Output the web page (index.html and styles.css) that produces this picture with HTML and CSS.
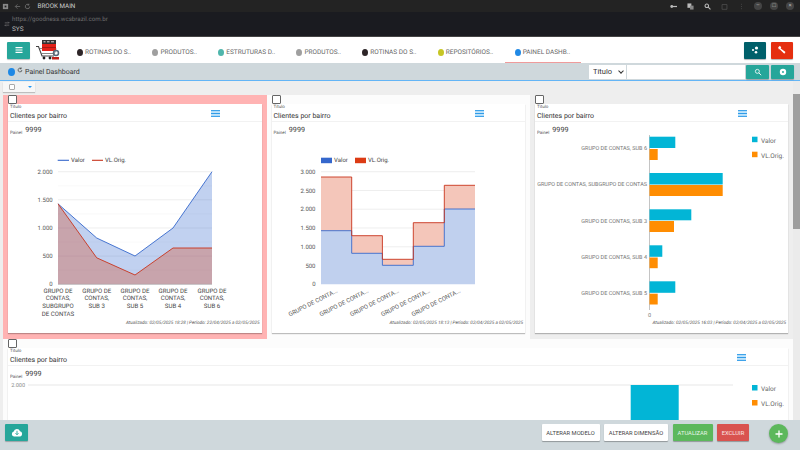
FILE: index.html
```html
<!DOCTYPE html>
<html lang="en">
<head>
  <title>Painel Dashboard</title>
  <link rel="stylesheet" href="styles.css">
</head>
<body>
  <div class="win-bar">
    <div class="win-left">
      <svg class="win-ico" viewBox="0 0 8 8"><rect x="1" y="1" width="6" height="6" fill="#888"/><rect x="3" y="3" width="2" height="2" fill="#222"/></svg>
      <svg class="win-ico win-nav" viewBox="0 0 8 8"><path d="M7 4H1.5M4 1.5L1.5 4 4 6.5" fill="none" stroke="#666" stroke-width="1"/></svg>
      <svg class="win-ico win-nav" viewBox="0 0 8 8"><path d="M6.5 4A2.5 2.5 0 1 1 5.5 2M5.5 .8V2.4H4" fill="none" stroke="#777" stroke-width=".9"/></svg>
      <span class="win-title">BROOK MAIN</span>
    </div>
    <div class="win-right">
      <svg class="win-ico" viewBox="0 0 8 8"><circle cx="2" cy="4" r="1.6" fill="#bbb"/><path d="M3 3.3h5v1.4H3z" fill="#bbb"/></svg>
      <svg class="win-ico" viewBox="0 0 8 8"><rect x=".5" y=".5" width="4.5" height="5" fill="#bbb"/><rect x="3.5" y="3" width="4" height="4.5" fill="#888"/></svg>
      <svg class="win-ico" viewBox="0 0 8 8"><circle cx="3.2" cy="3.2" r="2" fill="none" stroke="#bbb" stroke-width="1.2"/><path d="M4.8 4.8L7.4 7.4" stroke="#bbb" stroke-width="1.2"/></svg>
      <svg class="win-ico" viewBox="0 0 8 8"><path d="M1.2 1.8h5.6v5.4H1.2z" fill="none" stroke="#555" stroke-width=".8"/></svg>
      <svg class="win-ico" viewBox="0 0 8 8"><path d="M4 1v.8M4 3.6v.8M4 6.2V7" stroke="#555" stroke-width="1"/></svg>
      <span class="win-btn">&ndash;</span>
      <span class="win-btn">&#9633;</span>
      <span class="win-btn">&times;</span>
    </div>
  </div>

  <div class="url-bar">
    <svg class="url-swap" viewBox="0 0 8 8"><path d="M1 2.5h6M5.5 1L7 2.5M7 5.5H1M2.5 7L1 5.5" fill="none" stroke="#888" stroke-width=".8"/></svg>
    <div>
      <div class="url-text">https://goodness.wcsbrazil.com.br</div>
      <div class="url-sys">SYS</div>
    </div>
  </div>

  <div class="top-bar">
    <button class="btn-teal btn-menu" type="button">
      <svg viewBox="0 0 10 10"><path d="M1.5 2.6h7M1.5 5h7M1.5 7.4h7" stroke="#fff" stroke-width="1.1"/></svg>
    </button>
    <svg class="logo" viewBox="0 0 24 20">
      <path d="M0 6.500h2.500L6 16h12" fill="none" stroke="#444" stroke-width="1.100"/>
      <path d="M3.500 8.500H20l-1.500 5H5.500" fill="none" stroke="#555" stroke-width=".7"/>
      <rect x="6" y="1" width="14" height="10" fill="#e32119"/>
      <rect x="6" y="0" width="14" height="4" fill="#333"/>
      <path d="M7.500 1.800h2M11 1.800h2.500M15 1.800h3" stroke="#ddd" stroke-width="1"/>
      <path d="M6 7.500h14" stroke="#7a1512" stroke-width=".6"/>
      <circle cx="8" cy="18" r="1.400" fill="#222"/>
      <circle cx="14" cy="18" r="1.400" fill="#222"/>
      <circle cx="20" cy="13" r="2.500" fill="none" stroke="#567" stroke-width="1.500"/>
      <rect x="16" y="17" width="7" height="2.500" fill="#c0211b"/>
    </svg>
    <nav class="tabs">
      <span class="tab"><i class="dot dot-black"></i>ROTINAS DO S..</span>
      <span class="tab"><i class="dot dot-gray"></i>PRODUTOS..</span>
      <span class="tab"><i class="dot dot-teal"></i>ESTRUTURAS D..</span>
      <span class="tab"><i class="dot dot-gray"></i>PRODUTOS..</span>
      <span class="tab"><i class="dot dot-black"></i>ROTINAS DO S..</span>
      <span class="tab"><i class="dot dot-yellow"></i>REPOSITÓRIOS..</span>
      <span class="tab tab-active"><i class="dot dot-blue"></i>PAINEL DASHB..</span>
    </nav>
    <div class="top-actions">
      <button class="btn-square btn-dark" type="button">
        <svg viewBox="0 0 10 10"><circle cx="6.500" cy="3" r="1.600" fill="#fff"/><circle cx="3" cy="5" r="1.100" fill="#fff"/><circle cx="6" cy="7.300" r="1.300" fill="#fff"/></svg>
      </button>
      <button class="btn-square btn-red" type="button">
        <svg viewBox="0 0 10 10"><path d="M1.200 2.200L3 .8l1.200 1.600-.5 1 4.800 3.600-1.200 1.700L2.700 4.200l-1 .1z" fill="#fff"/></svg>
      </button>
    </div>
  </div>

  <div class="sub-bar">
    <i class="dot dot-blue dot-big"></i>
    <svg class="sub-refresh" viewBox="0 0 8 8"><path d="M6.500 4A2.500 2.500 0 1 1 5.500 2M5.500 .6V2.400H3.700" fill="none" stroke="#444" stroke-width="1"/></svg>
    <span class="sub-title">Painel Dashboard</span>
    <div class="search">
      <div class="search-select">
        <select class="search-field">
          <option>Título</option>
        </select>
      </div>
      <input class="search-input" type="text">
      <button class="btn-teal btn-search" type="button">
        <svg viewBox="0 0 10 10"><circle cx="4.200" cy="4.200" r="2.500" fill="none" stroke="#fff" stroke-width="1"/><path d="M6 6l3 3" stroke="#fff" stroke-width="1.100"/></svg>
      </button>
      <button class="btn-teal btn-search" type="button">
        <svg viewBox="0 0 10 10"><circle cx="5" cy="5" r="4" fill="#fff"/><circle cx="5" cy="5" r="1.200" fill="#26a69a"/></svg>
      </button>
    </div>
  </div>

  <div class="content">
    <div class="toolbar">
      <div class="select-all">
        <input class="check check-small" type="checkbox">
        <i class="caret"></i>
      </div>
    </div>

    <div class="grid">
      <div class="tile tile-alert">
        <input class="check" type="checkbox">
        <div class="card">
          <div class="card-head">
            <div>
              <div class="card-label">Título</div>
              <div class="card-title">Clientes por bairro</div>
            </div>
            <svg class="card-menu" viewBox="0 0 9 7"><rect width="9" height="7" fill="#bfe3fa"/><path d="M0 .6h9M0 3.500h9M0 6.400h9" stroke="#2f9be8" stroke-width="1"/></svg>
          </div>
          <div class="card-value"><span class="card-label">Painel</span><span class="value">9999</span></div>
          <svg class="chart" width="253" height="183" viewBox="8 135 253 183">
            <g class="grid-minor">
              <path d="M58 185.800H212M58 213.900H212M58 242.100H212M58 270.200H212"/>
            </g>
            <g class="grid-major">
              <path d="M58 171.700H212M58 199.800H212M58 228H212M58 256.100H212"/>
            </g>
            <path d="M58 203.800L96.700 238 135 256 173 228 212 171.700V284.300H58Z" fill="#3366cc" fill-opacity=".3"/>
            <path d="M58 203.800L96.700 257.800 135 275 173 248 212 248V284.300H58Z" fill="#dc3912" fill-opacity=".3"/>
            <path d="M58 203.800L96.700 238 135 256 173 228 212 171.700" fill="none" stroke="#3366cc" stroke-width=".9"/>
            <path d="M58 203.800L96.700 257.800 135 275 173 248 212 248" fill="none" stroke="#c8321a" stroke-width=".9"/>
            <path d="M58 284.300H212" stroke="#999" stroke-width=".5"/>
            <path d="M57.700 160.300H69" stroke="#3366cc" stroke-width="1.100"/>
            <text class="legend" x="71" y="162.300">Valor</text>
            <path d="M92 160.300H103" stroke="#c8321a" stroke-width="1.100"/>
            <text class="legend" x="105" y="162.300">VL.Orig.</text>
            <g class="tick">
              <text x="52.700" y="173.700">2.000</text>
              <text x="52.700" y="201.800">1.500</text>
              <text x="52.700" y="230">1.000</text>
              <text x="52.700" y="258.100">500</text>
              <text x="52.700" y="286.300">0</text>
            </g>
            <g class="cat">
              <text x="58" y="292.700">GRUPO DE</text><text x="58" y="300.300">CONTAS,</text><text x="58" y="308">SUBGRUPO</text><text x="58" y="315.500">DE CONTAS</text>
              <text x="96.700" y="292.700">GRUPO DE</text><text x="96.700" y="300.300">CONTAS,</text><text x="96.700" y="308">SUB 3</text>
              <text x="135" y="292.700">GRUPO DE</text><text x="135" y="300.300">CONTAS,</text><text x="135" y="308">SUB 5</text>
              <text x="173" y="292.700">GRUPO DE</text><text x="173" y="300.300">CONTAS,</text><text x="173" y="308">SUB 4</text>
              <text x="212" y="292.700">GRUPO DE</text><text x="212" y="300.300">CONTAS,</text><text x="212" y="308">SUB 6</text>
            </g>
          </svg>
          <div class="card-status">Atualizado: 02/05/2025 18:28 | Período: 22/04/2025 a 02/05/2025</div>
        </div>
      </div>

      <div class="tile tile-white">
        <input class="check" type="checkbox">
        <div class="card">
          <div class="card-head">
            <div>
              <div class="card-label">Título</div>
              <div class="card-title">Clientes por bairro</div>
            </div>
            <svg class="card-menu" viewBox="0 0 9 7"><rect width="9" height="7" fill="#bfe3fa"/><path d="M0 .6h9M0 3.500h9M0 6.400h9" stroke="#2f9be8" stroke-width="1"/></svg>
          </div>
          <div class="card-value"><span class="card-label">Painel</span><span class="value">9999</span></div>
          <svg class="chart" width="252" height="183" viewBox="272 135 252 183">
            <g class="grid-major">
              <path d="M321 171.700H475M321 190.500H475M321 209.200H475M321 228H475M321 246.800H475M321 265.500H475"/>
            </g>
            <path d="M321 230.700H351.700V253.300H382.400V265.300H413.300V246.300H444.300V209H475V284.300H321Z" fill="#c0d0ee"/>
            <path d="M321 177H351.700V235.700H382.400V259.300H413.300V222.700H444.300V185.300H475V209H444.300V246.300H413.300V265.300H382.400V253.300H351.700V230.700H321Z" fill="#f4c6ba"/>
            <path d="M321 230.700H351.700V253.300H382.400V265.300H413.300V246.300H444.300V209H475" fill="none" stroke="#3366cc" stroke-width=".9"/>
            <path d="M321 177H351.700V235.700H382.400V259.300H413.300V222.700H444.300V185.300H475" fill="none" stroke="#c8321a" stroke-width=".9"/>
            <rect x="321" y="157.700" width="11" height="5.500" fill="#3366cc"/>
            <text class="legend" x="334" y="162.300">Valor</text>
            <rect x="355" y="157.700" width="11" height="5.500" fill="#dc3912"/>
            <text class="legend" x="368" y="162.300">VL.Orig.</text>
            <g class="tick">
              <text x="315.500" y="173.700">3.000</text>
              <text x="315.500" y="192.500">2.500</text>
              <text x="315.500" y="211.200">2.000</text>
              <text x="315.500" y="230">1.500</text>
              <text x="315.500" y="248.800">1.000</text>
              <text x="315.500" y="267.500">500</text>
              <text x="315.500" y="286.300">0</text>
            </g>
            <g class="cat-tilt">
              <text transform="translate(338 292) rotate(-27)">GRUPO DE CONTA...</text>
              <text transform="translate(369 292) rotate(-27)">GRUPO DE CONTA...</text>
              <text transform="translate(399.500 292) rotate(-27)">GRUPO DE CONTA...</text>
              <text transform="translate(430.500 292) rotate(-27)">GRUPO DE CONTA...</text>
              <text transform="translate(461 292) rotate(-27)">GRUPO DE CONTA...</text>
            </g>
          </svg>
          <div class="card-status">Atualizado: 02/05/2025 18:13 | Período: 02/04/2025 a 02/05/2025</div>
        </div>
      </div>

      <div class="tile">
        <input class="check" type="checkbox">
        <div class="card">
          <div class="card-head">
            <div>
              <div class="card-label">Título</div>
              <div class="card-title">Clientes por bairro</div>
            </div>
            <svg class="card-menu" viewBox="0 0 9 7"><rect width="9" height="7" fill="#bfe3fa"/><path d="M0 .6h9M0 3.500h9M0 6.400h9" stroke="#2f9be8" stroke-width="1"/></svg>
          </div>
          <div class="card-value"><span class="card-label">Painel</span><span class="value">9999</span></div>
          <svg class="chart" width="252" height="183" viewBox="535 135 252 183">
            <path d="M649.500 135V310" stroke="#aaa" stroke-width=".7"/>
            <g fill="#00b5d6">
              <rect x="649.500" y="136.700" width="25.800" height="11.300"/>
              <rect x="649.500" y="173" width="73.200" height="11.500"/>
              <rect x="649.500" y="209.300" width="41.800" height="11"/>
              <rect x="649.500" y="245.300" width="12.800" height="11.500"/>
              <rect x="649.500" y="281.300" width="25.800" height="11.500"/>
            </g>
            <g fill="#ff8c00">
              <rect x="649.500" y="149" width="8.200" height="11"/>
              <rect x="649.500" y="185" width="73.200" height="11"/>
              <rect x="649.500" y="221" width="24.500" height="11"/>
              <rect x="649.500" y="257.500" width="8.200" height="10.700"/>
              <rect x="649.500" y="293.700" width="8.200" height="10.800"/>
            </g>
            <g class="bar-cat">
              <text x="647" y="149.700">GRUPO DE CONTAS, SUB 6</text>
              <text x="647" y="186">GRUPO DE CONTAS, SUBGRUPO DE CONTAS</text>
              <text x="647" y="222.700">GRUPO DE CONTAS, SUB 3</text>
              <text x="647" y="259">GRUPO DE CONTAS, SUB 4</text>
              <text x="647" y="295">GRUPO DE CONTAS, SUB 5</text>
            </g>
            <text class="bar-zero" x="649.500" y="317">0</text>
            <rect x="752" y="136.700" width="5.500" height="5.500" fill="#00b5d6"/>
            <text class="legend-big" x="761" y="142.800">Valor</text>
            <rect x="752" y="151.700" width="5.500" height="5.500" fill="#ff8c00"/>
            <text class="legend-big" x="761" y="158">VL.Orig.</text>
          </svg>
          <div class="card-status">Atualizado: 02/05/2025 16:03 | Período: 02/04/2025 a 02/05/2025</div>
        </div>
      </div>

      <div class="tile tile-white tile-wide">
        <input class="check" type="checkbox">
        <div class="card">
          <div class="card-head card-head-wide">
            <div>
              <div class="card-label">Título</div>
              <div class="card-title">Clientes por bairro</div>
            </div>
            <svg class="card-menu" viewBox="0 0 9 7"><rect width="9" height="7" fill="#bfe3fa"/><path d="M0 .6h9M0 3.500h9M0 6.400h9" stroke="#2f9be8" stroke-width="1"/></svg>
          </div>
          <div class="card-value"><span class="card-label">Painel</span><span class="value">9999</span></div>
          <svg class="chart" width="780" height="130" viewBox="8 379 780 130">
            <path d="M28 385H733" stroke="#ddd" stroke-width=".7"/>
            <text class="tick-wide" x="25" y="387">2.000</text>
            <rect x="630.700" y="385" width="48" height="120" fill="#00b5d6"/>
            <rect x="752" y="385" width="5.500" height="5.500" fill="#00b5d6"/>
            <text class="legend-big" x="761" y="391">Valor</text>
            <rect x="752" y="400" width="5.500" height="5.500" fill="#ff8c00"/>
            <text class="legend-big" x="761" y="406">VL.Orig.</text>
          </svg>
        </div>
      </div>
    </div>

    <div class="scrollbar"><div class="scroll-thumb"></div></div>
  </div>

  <div class="footer">
    <button class="btn-teal btn-cloud" type="button">
      <svg viewBox="0 0 12 9"><path d="M3 8.500A2.500 2.500 0 0 1 2.700 3.600 3.300 3.300 0 0 1 9 3.300 2.700 2.700 0 0 1 9.300 8.500Z" fill="#fff"/><path d="M6 2.800V6.500M4.500 5.200L6 6.800 7.500 5.200" fill="none" stroke="#26a69a" stroke-width=".9"/></svg>
    </button>
    <div class="footer-actions">
      <button class="btn-flat btn-model" type="button">ALTERAR MODELO</button>
      <button class="btn-flat btn-size" type="button">ALTERAR DIMENSÃO</button>
      <button class="btn-flat btn-update" type="button">ATUALIZAR</button>
      <button class="btn-flat btn-delete" type="button">EXCLUIR</button>
    </div>
    <button class="btn-add" type="button">
      <svg viewBox="0 0 10 10"><path d="M5 1.500v7M1.500 5h7" stroke="#fff" stroke-width="1.300"/></svg>
    </button>
  </div>
</body>
</html>
```

FILE: styles.css
```css
* {
  box-sizing: border-box;
}

body {
  margin: 0;
  width: 800px;
  height: 450px;
  overflow: hidden;
  display: flex;
  flex-direction: column;
  font-family: Roboto, "Liberation Sans", sans-serif;
  text-rendering: geometricPrecision;
  color: #333;
  background-color: #eee;
}

button {
  border: none;
  padding: 0;
  cursor: pointer;
  font-family: inherit;
}

svg {
  display: block;
}

/* window chrome */
.win-bar {
  height: 12px;
  flex: none;
  display: flex;
  justify-content: space-between;
  align-items: center;
  padding: 0 2px;
  background-color: #232323;
}

.win-left,
.win-right {
  display: flex;
  align-items: center;
}

.win-ico {
  width: 7px;
  height: 7px;
  margin-right: 3px;
}

.win-nav {
  margin-left: 1.500px;
  margin-right: 2px;
}

.win-title {
  margin-left: 4.500px;
  font-size: 6.300px;
  color: #cfcfcf;
}

.win-right .win-ico {
  margin: 0 5px;
}

.win-btn {
  width: 8px;
  height: 8px;
  margin: 0 4px;
  border-radius: 50%;
  background-color: #444;
  color: #bbb;
  font-size: 6px;
  line-height: 8px;
  text-align: center;
}

.url-bar {
  height: 25px;
  flex: none;
  display: flex;
  align-items: center;
  padding-left: 4px;
  background-color: #1a1b20;
  border-bottom: 1px solid #444;
}

.url-swap {
  width: 6px;
  height: 6px;
  margin-right: 2px;
}

.url-text {
  font-size: 6.200px;
  line-height: 10px;
  color: #6c6c6c;
}

.url-sys {
  font-size: 6.500px;
  line-height: 10px;
  color: #bbb;
}

/* top menu */
.top-bar {
  height: 26px;
  flex: none;
  display: flex;
  align-items: center;
  background-color: #fff;
}

.btn-teal {
  display: flex;
  align-items: center;
  justify-content: center;
  background-color: #26a69a;
  border-radius: 1px;
  box-shadow: 0 1px 1px rgba(0, 0, 0, .25);
}

.btn-menu {
  width: 23px;
  height: 17px;
  margin-left: 7px;
}

.btn-menu svg {
  width: 10px;
  height: 10px;
}

.logo {
  width: 24px;
  height: 20px;
  margin-left: 6px;
}

.tabs {
  display: flex;
  gap: 21.300px;
  margin-left: 17px;
  padding-top: 4px;
  align-self: stretch;
}

.tab {
  position: relative;
  display: flex;
  align-items: center;
  font-size: 6.500px;
  color: #666;
  opacity: .99;
}

.tab-active::after {
  content: "";
  position: absolute;
  left: -10px;
  right: -11px;
  bottom: 0;
  height: 1px;
  background-color: #ef9a9a;
}

.dot {
  width: 6px;
  height: 7px;
  margin-right: 2px;
  border-radius: 50%;
}

.dot-black { background-color: #2b2326; }
.dot-gray { background-color: #9e9e9e; }
.dot-teal { background-color: #4db6ac; }
.dot-yellow { background-color: #c6c622; }
.dot-blue { background-color: #1e88e5; }

.top-actions {
  display: flex;
  gap: 5px;
  margin-left: auto;
  margin-right: 7px;
}

.btn-square {
  width: 22px;
  height: 17px;
  display: flex;
  align-items: center;
  justify-content: center;
  border-radius: 1px;
  box-shadow: 0 1px 1px rgba(0, 0, 0, .3);
}

.btn-square svg {
  width: 10px;
  height: 10px;
}

.btn-dark { background-color: #00606a; }
.btn-red { background-color: #e52f10; }

/* page title and search */
.sub-bar {
  height: 18px;
  flex: none;
  display: flex;
  align-items: center;
  padding-left: 8px;
  background-color: #cfd8dc;
  border-bottom: 1px solid #64b5f6;
}

.dot-big {
  width: 7px;
  height: 8px;
  margin-right: 2px;
}

.sub-refresh {
  width: 6px;
  height: 6px;
  margin: -3px 2px 0 0;
}

.sub-title {
  font-size: 7px;
  color: #333;
  opacity: .99;
}

.search {
  display: flex;
  margin-left: auto;
  margin-right: 6px;
  height: 14px;
}

.search-select {
  position: relative;
  display: flex;
  width: 37px;
  margin-right: 1px;
  background-color: #fff;
}

.search-select::after {
  content: "";
  position: absolute;
  top: 4.500px;
  right: 3px;
  width: 3px;
  height: 3px;
  border-right: 1px solid #333;
  border-bottom: 1px solid #333;
  transform: rotate(45deg);
}

.search-field {
  appearance: none;
  width: 100%;
  height: 14px;
  padding: 0 0 0 4px;
  border: none;
  border-radius: 0;
  background: transparent;
  color: #333;
  font-family: inherit;
  font-size: 7.500px;
  line-height: 14px;
}

.search-input {
  width: 118px;
  margin-right: 1px;
  padding: 0;
  border: none;
  background-color: #fff;
}

.btn-search {
  width: 23px;
  margin-right: 2px;
}

.btn-search:last-child {
  margin-right: 0;
}

.btn-search svg {
  width: 8px;
  height: 8px;
}

/* dashboard area */
.content {
  position: relative;
  flex: 1;
  min-height: 0;
  overflow: hidden;
  background-color: #eee;
}

.toolbar {
  height: 14px;
  padding: 1px 0 0 3px;
}

.select-all {
  width: 32px;
  height: 10px;
  display: flex;
  align-items: center;
  padding-left: 6px;
  background-color: #f7f7f7;
  box-shadow: 0 1px 1px rgba(0, 0, 0, .2);
}

.caret {
  width: 0;
  height: 0;
  margin-left: 13px;
  border-left: 2px solid transparent;
  border-right: 2px solid transparent;
  border-top: 2px solid #2196f3;
}

.grid {
  display: grid;
  grid-template-columns: 263.500px 263.500px 263px;
  width: 790px;
  margin-left: 3px;
}

.tile {
  height: 244px;
  padding: 0 5px;
}

.tile-alert {
  background-color: #ffb3b3;
}

.tile-white {
  background-color: #fcfcfc;
}

.tile-wide {
  grid-column: 1 / 4;
  height: 300px;
}

.check {
  appearance: none;
  display: block;
  width: 9px;
  height: 9px;
  margin: 0;
  background-color: #fff;
  border: 1px solid #666;
  border-radius: 1px;
}

.check-small {
  width: 6px;
  height: 6px;
  border-color: #aaa;
}

.card {
  height: 229px;
  display: flex;
  flex-direction: column;
  background-color: #fff;
  box-shadow: 0 1px 1px rgba(0, 0, 0, .25);
}

.tile-wide .card {
  height: 287px;
}

.card-head {
  position: relative;
  height: 18px;
  flex: none;
  padding: 1px 0 0 2px;
  border-bottom: 1px solid #f2f2f2;
  opacity: .99;
}

.card-label {
  font-size: 4.500px;
  line-height: 6px;
  color: #555;
}

.card-title {
  font-size: 7px;
  line-height: 11px;
  color: #333;
}

.card-menu {
  position: absolute;
  top: 6px;
  left: 203px;
  width: 9px;
  height: 7px;
}

.card-head-wide .card-menu {
  left: 729px;
}

.card-value {
  height: 13px;
  flex: none;
  display: flex;
  align-items: flex-end;
  padding-left: 2px;
  opacity: .99;
}

.card-value .card-label {
  margin: 0 3px -1.500px 0;
}

.value {
  font-size: 7.200px;
  line-height: 10px;
  color: #333;
}

.chart {
  flex: none;
  opacity: .99;
}

.grid-major path {
  fill: none;
  stroke: #e2e2e2;
  stroke-width: .6;
}

.grid-minor path {
  fill: none;
  stroke: #f3f3f3;
  stroke-width: .5;
}

.legend {
  font-size: 6px;
  fill: #444;
}

.legend-big {
  font-size: 6.500px;
  fill: #666;
}

.tick text {
  font-size: 6px;
  text-anchor: end;
  fill: #555;
}

.tick-wide {
  font-size: 5.500px;
  text-anchor: end;
  fill: #888;
}

.cat text {
  font-size: 6.100px;
  text-anchor: middle;
  fill: #444;
}

.cat-tilt text {
  font-size: 6px;
  text-anchor: end;
  fill: #555;
}

.bar-cat text {
  font-size: 5.500px;
  text-anchor: end;
  fill: #777;
}

.bar-zero {
  font-size: 5.500px;
  text-anchor: middle;
  fill: #777;
}

.card-status {
  height: 14px;
  flex: none;
  padding: 2px 2px 0 0;
  font-size: 4.650px;
  font-style: italic;
  line-height: 7px;
  text-align: right;
  color: #555;
  opacity: .99;
}

.scrollbar {
  position: absolute;
  top: 0;
  right: 0;
  width: 7px;
  height: 100%;
  background-color: #ebebeb;
}

.scroll-thumb {
  height: 135px;
  margin-top: 13px;
  background-color: #9e9e9e;
}

/* bottom actions */
.footer {
  height: 30px;
  flex: none;
  display: flex;
  align-items: flex-start;
  padding: 4px 12px 0 5px;
  background-color: #cfd8dc;
}

.btn-cloud {
  width: 23px;
  height: 17px;
}

.btn-cloud svg {
  width: 12px;
  height: 9px;
}

.footer-actions {
  display: flex;
  gap: 4.500px;
  margin-left: auto;
  margin-right: 20px;
}

.btn-flat {
  height: 17px;
  font-size: 5.800px;
  border-radius: 1px;
  box-shadow: 0 1px 1px rgba(0, 0, 0, .3);
}

.btn-model { width: 58px; background-color: #fff; color: #444; }
.btn-size { width: 64px; background-color: #fff; color: #444; }
.btn-update { width: 40px; background-color: #5cb85c; color: #e8f5e8; }
.btn-delete { width: 32px; background-color: #d9534f; color: #fbe3e2; }

.btn-add {
  width: 19px;
  height: 19px;
  display: flex;
  align-items: center;
  justify-content: center;
  background-color: #5cb85c;
  border-radius: 50%;
  box-shadow: 0 1px 2px rgba(0, 0, 0, .3);
}

.btn-add svg {
  width: 10px;
  height: 10px;
}
```
